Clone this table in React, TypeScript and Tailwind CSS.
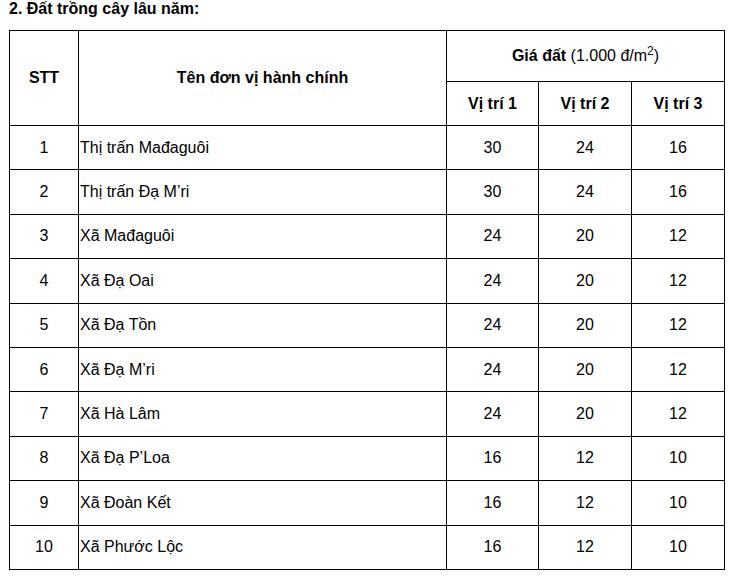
import React from "react";

const rows = [
  { stt: 1, name: "Thị trấn Mađaguôi", v: [30, 24, 16] },
  { stt: 2, name: "Thị trấn Đạ M’ri", v: [30, 24, 16] },
  { stt: 3, name: "Xã Mađaguôi", v: [24, 20, 12] },
  { stt: 4, name: "Xã Đạ Oai", v: [24, 20, 12] },
  { stt: 5, name: "Xã Đạ Tồn", v: [24, 20, 12] },
  { stt: 6, name: "Xã Đạ M’ri", v: [24, 20, 12] },
  { stt: 7, name: "Xã Hà Lâm", v: [24, 20, 12] },
  { stt: 8, name: "Xã Đạ P’Loa", v: [16, 12, 10] },
  { stt: 9, name: "Xã Đoàn Kết", v: [16, 12, 10] },
  { stt: 10, name: "Xã Phước Lộc", v: [16, 12, 10] },
];

export default function App() {
  return (
    <div className="min-h-screen bg-white pl-[9px] text-[16px] text-black [font-family:'Liberation_Sans',Arial,sans-serif]">
      <p className="mb-[12px] leading-[18px] font-bold">2. Đất trồng cây lâu năm:</p>

      <table className="w-[715px] table-fixed border-collapse border border-black">
        <colgroup>
          <col className="w-[69px]" />
          <col className="w-[368px]" />
          <col className="w-[92px]" />
          <col className="w-[93px]" />
          <col className="w-[93px]" />
        </colgroup>
        <thead>
          <tr className="h-[51px]">
            <th rowSpan={2} className="border border-black p-0 text-center align-middle font-bold">
              STT
            </th>
            <th rowSpan={2} className="border border-black p-0 text-center align-middle font-bold">
              Tên đơn vị hành chính
            </th>
            <th colSpan={3} className="border border-black p-0 text-center align-middle">
              <span className="font-bold">Giá đất</span>{" "}
              <span className="font-normal">
                (1.000 đ/m<sup className="text-[12px]">2</sup>)
              </span>
            </th>
          </tr>
          <tr className="h-[44px]">
            <th className="border border-black p-0 text-center align-middle font-bold">Vị trí 1</th>
            <th className="border border-black p-0 text-center align-middle font-bold">Vị trí 2</th>
            <th className="border border-black p-0 text-center align-middle font-bold">Vị trí 3</th>
          </tr>
        </thead>
        <tbody>
          {rows.map((r) => (
            <tr key={r.stt} className="h-[44.4px]">
              <td className="border border-black p-0 text-center align-middle">{r.stt}</td>
              <td className="border border-black p-0 pl-px text-left align-middle">{r.name}</td>
              {r.v.map((n, i) => (
                <td key={i} className="border border-black p-0 text-center align-middle">
                  {n}
                </td>
              ))}
            </tr>
          ))}
        </tbody>
      </table>
    </div>
  );
}
